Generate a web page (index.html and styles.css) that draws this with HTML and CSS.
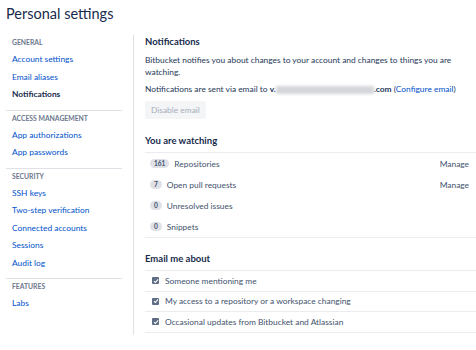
FILE: index.html
```html
<!DOCTYPE html>
<html lang="en">
<head>
    <meta charset="UTF-8">
    <title>Personal settings</title>
    <link rel="stylesheet" href="styles.css">
</head>
<body>
    <h1 class="page-title">Personal settings</h1>
    <div class="layout">
        <nav class="sidebar">
            <div class="nav-group">
                <h4>General</h4>
                <a href="#">Account settings</a>
                <a href="#">Email aliases</a>
                <a href="#" class="active">Notifications</a>
            </div>
            <div class="nav-group">
                <h4>Access management</h4>
                <a href="#">App authorizations</a>
                <a href="#">App passwords</a>
            </div>
            <div class="nav-group">
                <h4>Security</h4>
                <a href="#">SSH keys</a>
                <a href="#">Two-step verification</a>
                <a href="#">Connected accounts</a>
                <a href="#">Sessions</a>
                <a href="#">Audit log</a>
            </div>
            <div class="nav-group">
                <h4>Features</h4>
                <a href="#">Labs</a>
            </div>
        </nav>

        <main class="content">
            <h2>Notifications</h2>
            <p>Bitbucket notifies you about changes to your account and changes to things you are watching.</p>
            <p class="sent">Notifications are sent via email to <b>v.<span class="blur"></span>.com</b> (<a href="#">Configure email</a>)</p>
            <button class="btn" disabled>Disable email</button>

            <h2 class="section">You are watching</h2>
            <ul class="list">
                <li><span class="badge">161</span> Repositories <a class="manage" href="#">Manage</a></li>
                <li><span class="badge">7</span> Open pull requests <a class="manage" href="#">Manage</a></li>
                <li><span class="badge">0</span> Unresolved issues</li>
                <li><span class="badge">0</span> Snippets</li>
            </ul>

            <h2 class="section email-head">Email me about</h2>
            <ul class="list checks">
                <li><span class="check"><svg viewBox="0 0 8 8" width="6" height="6"><path d="M1.3 4.2 L3.2 6 L6.8 1.8" fill="none" stroke="#fff" stroke-width="1.5"/></svg></span> Someone mentioning me</li>
                <li><span class="check"><svg viewBox="0 0 8 8" width="6" height="6"><path d="M1.3 4.2 L3.2 6 L6.8 1.8" fill="none" stroke="#fff" stroke-width="1.5"/></svg></span> My access to a repository or a workspace changing</li>
                <li><span class="check"><svg viewBox="0 0 8 8" width="6" height="6"><path d="M1.3 4.2 L3.2 6 L6.8 1.8" fill="none" stroke="#fff" stroke-width="1.5"/></svg></span> Occasional updates from Bitbucket and Atlassian</li>
            </ul>
        </main>
    </div>
</body>
</html>
```

FILE: styles.css
```css
body {
    margin: 0;
    font-family: Lato, sans-serif;
    font-size: 8.4px;
    color: #172b4d;
    background: #fff;
    overflow: hidden;
}

.page-title {
    font-size: 14.5px;
    font-weight: 400;
    margin: 0;
    padding-left: 6px;
    height: 35px;
    line-height: 28px;
}

.layout {
    display: flex;
    align-items: flex-start;
}

.sidebar {
    width: 116px;
    padding: 0 11px 0 6px;
    border-right: 1px solid #dfe1e6;
    height: 300px;
}

.nav-group {
    display: flex;
    flex-direction: column;
    padding: 0 0 6px 6px;
    border-bottom: 1.5px solid #dfe1e6;
}

.nav-group:last-child {
    border-bottom: none;
}

.nav-group h4 {
    font-size: 6.8px;
    text-transform: uppercase;
    color: #6b778c;
    margin: 0 0 2px;
    line-height: 14px;
}

.nav-group a {
    color: #0052cc;
    text-decoration: none;
    line-height: 17.5px;
}

.nav-group a.active {
    color: #172b4d;
    font-weight: 700;
}

.content {
    flex: 1;
    padding-left: 11px;
}

.content h2 {
    font-size: 9.5px;
    font-weight: 700;
    margin: 0 0 5px;
    line-height: 14px;
}

.content p {
    margin: 0;
    line-height: 12.4px;
    color: #253858;
}

.content p.sent {
    margin-top: 4px;
}

.content a {
    color: #0052cc;
    text-decoration: none;
}

.blur {
    display: inline-block;
    width: 98px;
    height: 8px;
    background: #d4d6da;
    filter: blur(1.5px);
    vertical-align: middle;
}

.btn {
    font: inherit;
    background: #f4f5f7;
    color: #a5adba;
    border: none;
    border-radius: 3px;
    padding: 0 6px;
    height: 18px;
    margin-top: 6px;
    display: block;
}

.content h2.section {
    margin: 15px 0 0;
    padding-bottom: 4px;
    border-bottom: 1.5px solid #ebecf0;
}

.content h2.email-head {
    margin-top: 14px;
}

.list {
    list-style: none;
    margin: 0;
    padding: 0;
    border-bottom: 1.5px solid #ebecf0;
}

.list li {
    display: flex;
    align-items: center;
    gap: 5px;
    height: 21px;
    padding-left: 5px;
    color: #42526e;
}

.badge {
    background: #dfe1e6;
    color: #42526e;
    font-size: 6.5px;
    font-weight: 700;
    border-radius: 5px;
    padding: 0 4px;
    line-height: 9px;
}

.manage {
    margin-left: auto;
    margin-right: 7px;
    color: #42526e !important;
}

.checks li {
    height: 19.5px;
    border-top: 1.5px solid #ebecf0;
}

.checks li:first-child {
    border-top: none;
}

.check {
    width: 7px;
    height: 7px;
    background: #5e6c84;
    border-radius: 1px;
    display: flex;
    align-items: center;
    justify-content: center;
    margin: 0 1px 0 2px;
}
```
